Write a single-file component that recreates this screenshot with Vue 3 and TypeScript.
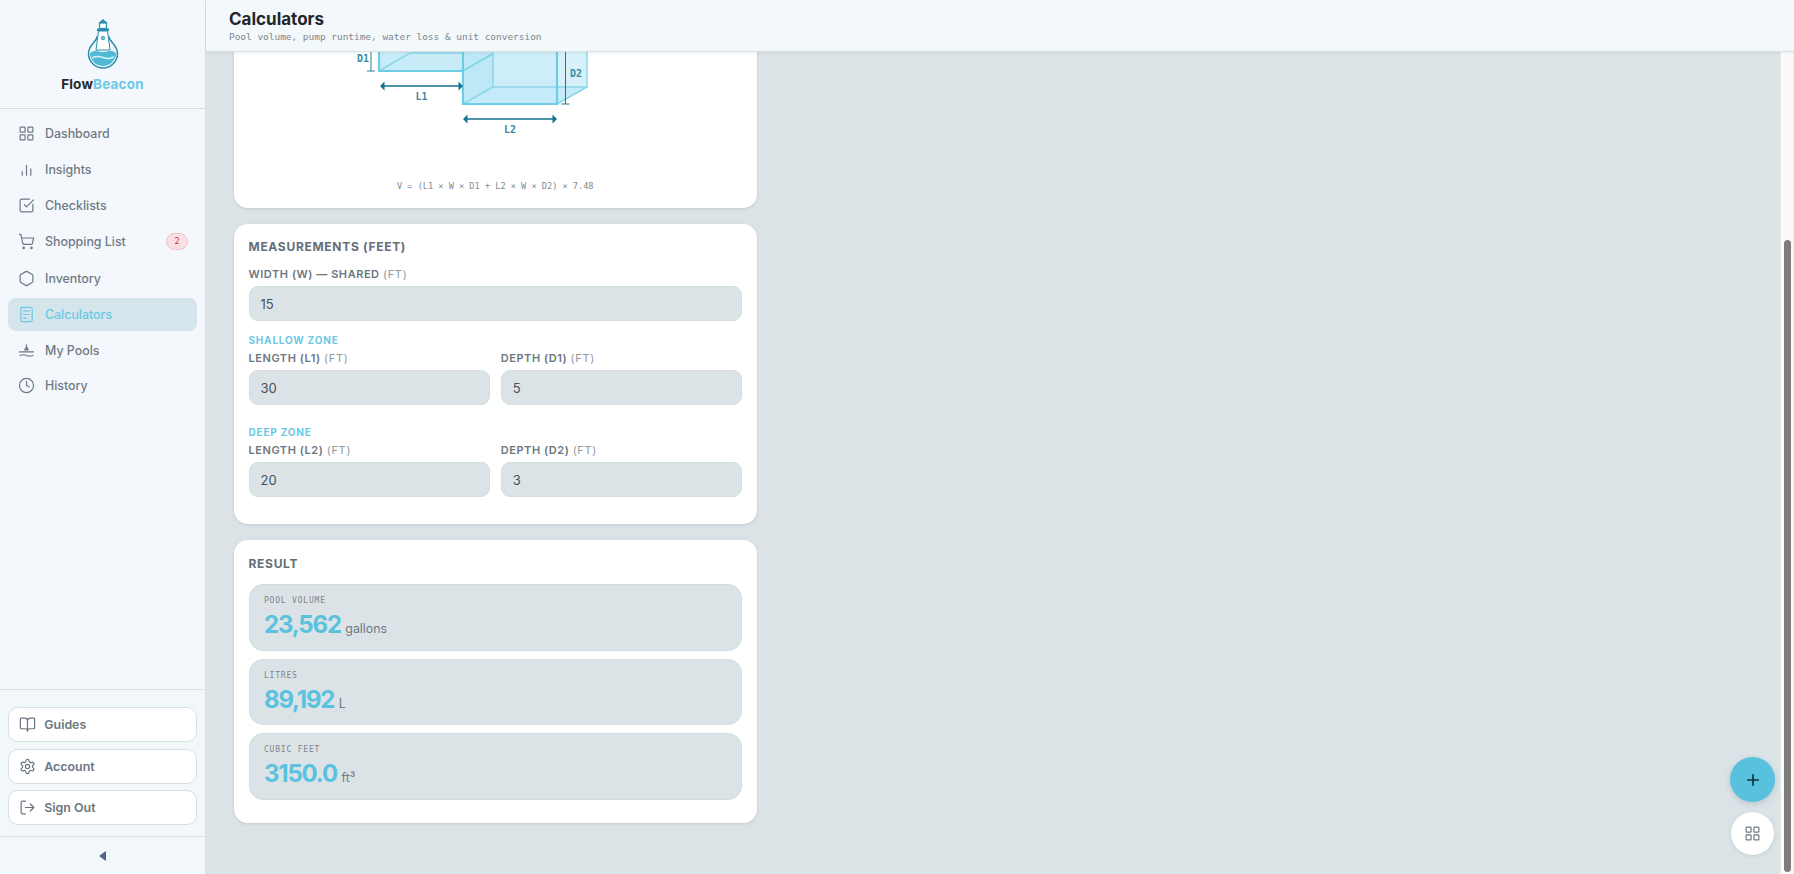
<script setup lang="ts">
import { onMounted, ref } from 'vue'

const scroller = ref<HTMLElement | null>(null)

const navItems = [
  { label: 'Dashboard', icon: 'grid' },
  { label: 'Insights', icon: 'chart' },
  { label: 'Checklists', icon: 'check' },
  { label: 'Shopping List', icon: 'cart', badge: 2 },
  { label: 'Inventory', icon: 'hex' },
  { label: 'Calculators', icon: 'calc', active: true },
  { label: 'My Pools', icon: 'pool' },
  { label: 'History', icon: 'clock' },
]
const footItems = [
  { label: 'Guides', icon: 'book' },
  { label: 'Account', icon: 'gear' },
  { label: 'Sign Out', icon: 'out' },
]
const results = [
  { label: 'POOL VOLUME', value: '23,562', unit: 'gallons' },
  { label: 'LITRES', value: '89,192', unit: 'L' },
  { label: 'CUBIC FEET', value: '3150.0', unit: 'ft³' },
]
const icons: Record<string, string> = {
  grid: '<rect x="3" y="3" width="7" height="7" rx="1"/><rect x="14" y="3" width="7" height="7" rx="1"/><rect x="14" y="14" width="7" height="7" rx="1"/><rect x="3" y="14" width="7" height="7" rx="1"/>',
  chart: '<path d="M6 20v-5M12 20V6M18 20v-9"/>',
  check: '<path d="M21 10.5V19a2 2 0 0 1-2 2H5a2 2 0 0 1-2-2V5a2 2 0 0 1 2-2h11"/><path d="m9 11 3 3L22 4"/>',
  cart: '<circle cx="8" cy="21" r="1"/><circle cx="19" cy="21" r="1"/><path d="M2.05 2.05h2l2.66 12.42a2 2 0 0 0 2 1.58h9.78a2 2 0 0 0 1.95-1.57l1.65-7.43H5.12"/>',
  hex: '<path d="M21 16V8a2 2 0 0 0-1-1.73l-7-4a2 2 0 0 0-2 0l-7 4A2 2 0 0 0 3 8v8a2 2 0 0 0 1 1.73l7 4a2 2 0 0 0 2 0l7-4A2 2 0 0 0 21 16z"/>',
  calc: '<rect x="4" y="2" width="16" height="20" rx="2"/><path d="M8 7h8M8 12h8M8 17h4"/>',
  pool: '<path d="M12 4v6"/><path d="M9.500 11l2.500-4 2.500 4z" fill="currentColor"/><path d="M2 14h20"/><path d="M3 19q4.500-2 9 0t9 0"/>',
  clock: '<circle cx="12" cy="12" r="10"/><path d="M12 6v6l4 2"/>',
  book: '<path d="M12 7v14"/><path d="M3 18a1 1 0 0 1-1-1V4a1 1 0 0 1 1-1h5a4 4 0 0 1 4 4 4 4 0 0 1 4-4h5a1 1 0 0 1 1 1v13a1 1 0 0 1-1 1h-6a3 3 0 0 0-3 3 3 3 0 0 0-3-3z"/>',
  gear: '<path d="M12.220 2h-.44a2 2 0 0 0-2 2v.18a2 2 0 0 1-1 1.730l-.43.25a2 2 0 0 1-2 0l-.15-.08a2 2 0 0 0-2.730.73l-.22.38a2 2 0 0 0 .73 2.730l.15.1a2 2 0 0 1 1 1.720v.51a2 2 0 0 1-1 1.740l-.15.09a2 2 0 0 0-.73 2.730l.22.38a2 2 0 0 0 2.730.73l.15-.08a2 2 0 0 1 2 0l.43.25a2 2 0 0 1 1 1.730V20a2 2 0 0 0 2 2h.44a2 2 0 0 0 2-2v-.18a2 2 0 0 1 1-1.730l.43-.25a2 2 0 0 1 2 0l.15.08a2 2 0 0 0 2.730-.73l.22-.39a2 2 0 0 0-.73-2.730l-.15-.08a2 2 0 0 1-1-1.740v-.5a2 2 0 0 1 1-1.740l.15-.09a2 2 0 0 0 .73-2.730l-.22-.38a2 2 0 0 0-2.730-.73l-.15.08a2 2 0 0 1-2 0l-.43-.25a2 2 0 0 1-1-1.730V4a2 2 0 0 0-2-2z"/><circle cx="12" cy="12" r="3"/>',
  out: '<path d="M9 21H5a2 2 0 0 1-2-2V5a2 2 0 0 1 2-2h4"/><path d="m16 17 5-5-5-5M21 12H9"/>',
}

onMounted(() => {
  const el = scroller.value
  if (el) el.scrollTop = el.scrollHeight
})
</script>

<template>
  <div class="app">
    <aside class="sidebar">
      <div class="brand">
        <svg class="logo" viewBox="0 0 40 56" width="40" height="56" fill="none">
          <path d="M14.500 21 C13 28 5.500 30 5.500 38.500 a14.500 14.500 0 0 0 29 0 C34.500 30 27 28 25.500 21" stroke="#2a8fae" stroke-width="1.500"/>
          <path d="M7 38 q4-3 7-2 t6 1 t6-1 t7 2 a13 13 0 0 1-26 0z" fill="#4fb9d6"/>
          <path d="M9 43 q5-2.500 11-.5 t11-.5" stroke="#d8f2f9" stroke-width="1.500"/>
          <path d="M15.500 16 h9 l2.500 19 h-14z" fill="#fff" stroke="#2a8fae" stroke-width="1"/>
          <rect x="14" y="13.500" width="12" height="2.500" fill="#2a8fae"/>
          <rect x="16.500" y="8" width="7" height="5.500" fill="#fff" stroke="#2a8fae" stroke-width="1.200"/>
          <path d="M15.500 8 L20 4 24.500 8z" fill="#2a8fae"/>
          <circle cx="20" cy="23" r="1.800" fill="#6fc0d8" stroke="#2a8fae" stroke-width=".7"/>
        </svg>
        <div class="brand-name">Flow<span>Beacon</span></div>
      </div>
      <nav class="nav">
        <a v-for="item in navItems" :key="item.label" class="nav-item" :class="{ active: item.active, tall: item.badge }">
          <svg class="ico" viewBox="0 0 24 24" v-html="icons[item.icon]"></svg>
          <span class="nav-label">{{ item.label }}</span>
          <span v-if="item.badge" class="badge">{{ item.badge }}</span>
        </a>
      </nav>
      <div class="foot">
        <a v-for="item in footItems" :key="item.label" class="foot-btn">
          <svg class="ico" viewBox="0 0 24 24" v-html="icons[item.icon]"></svg>
          <span>{{ item.label }}</span>
        </a>
      </div>
      <div class="collapse"><span class="tri"></span></div>
    </aside>

    <div class="main">
      <header class="topbar">
        <h1>Calculators</h1>
        <p>Pool volume, pump runtime, water loss &amp; unit conversion</p>
      </header>
      <div class="body">
        <div ref="scroller" class="scroller">
          <section class="card diagram-card">
            <svg class="diagram" viewBox="250 -49 491 222" width="491" height="222" fill="none">
              <!-- shallow box -->
              <path d="M380 71 L410 53.500 V0 H380z" fill="#d9f1f9"/>
              <path d="M380 0 H464 V71 H380z" fill="#c8ecf7"/>
              <path d="M380 71 L411 53 H494" stroke="#8ad6ea" stroke-width="1.500"/>
              <path d="M380 0 V71 H464" stroke="#6ecde6" stroke-width="2.200"/>
              <!-- deep box -->
              <path d="M558 -10 L588 -27 V87 L558 104z" fill="#e2f5fb"/>
              <path d="M494 -27 H588 V87 H494z" fill="#d3f0f9" fill-opacity=".7"/>
              <path d="M464 -10 H558 V104 H464z" fill="#cdeef8"/>
              <path d="M464 104 L494 87 V-27 L464 -10z" fill="#bfe8f6"/>
              <path d="M464 104 L494 87 H588 L558 104z" fill="#c4ebf7"/>
              <path d="M464 71 L494 53.500" stroke="#7ed2e8" stroke-width="1.500"/>
              <path d="M494 -27 V87 H588 V-27 M464 104 L494 87 M558 104 L588 87" stroke="#8ad6ea" stroke-width="1.500"/>
              <path d="M464 -10 V104 H558 V-10" stroke="#6ecde6" stroke-width="2.200"/>
              <!-- D1 -->
              <path d="M372 0 V71 M368 71 H376" stroke="#2b7f99" stroke-width="1"/>
              <text x="358" y="62" class="dim">D1</text>
              <!-- D2 -->
              <path d="M566.500 -10 V104 M562.500 104 H570.500" stroke="#1f7690" stroke-width="1"/>
              <text x="571" y="77" class="dim">D2</text>
              <!-- L1 -->
              <path d="M384 86 H461" stroke="#13728f" stroke-width="1.500"/>
              <path d="M381 86 l4.500-4.500 v9z M464 86 l-4.500-4.500 v9z" fill="#13728f"/>
              <text x="422.500" y="100" class="dim mid">L1</text>
              <!-- L2 -->
              <path d="M467 119 H555" stroke="#13728f" stroke-width="1.500"/>
              <path d="M464 119 l4.500-4.500 v9z M558 119 l-4.500-4.500 v9z" fill="#13728f"/>
              <text x="511" y="133" class="dim mid">L2</text>
            </svg>
            <p class="formula">V = (L1 × W × D1 + L2 × W × D2) × 7.48</p>
          </section>

          <section class="card form-card">
            <h2>MEASUREMENTS (FEET)</h2>
            <div class="field">
              <label>WIDTH (W) — SHARED <em>(FT)</em></label>
              <div class="input">15</div>
            </div>
            <h3 class="zone first">SHALLOW ZONE</h3>
            <div class="two">
              <div class="field">
                <label>LENGTH (L1) <em>(FT)</em></label>
                <div class="input">30</div>
              </div>
              <div class="field">
                <label>DEPTH (D1) <em>(FT)</em></label>
                <div class="input">5</div>
              </div>
            </div>
            <h3 class="zone">DEEP ZONE</h3>
            <div class="two">
              <div class="field">
                <label>LENGTH (L2) <em>(FT)</em></label>
                <div class="input">20</div>
              </div>
              <div class="field">
                <label>DEPTH (D2) <em>(FT)</em></label>
                <div class="input">3</div>
              </div>
            </div>
          </section>

          <section class="card result-card">
            <h2>RESULT</h2>
            <div class="results">
              <div v-for="r in results" :key="r.label" class="result">
                <div class="r-label">{{ r.label }}</div>
                <div class="r-value"><strong>{{ r.value }}</strong> <span>{{ r.unit }}</span></div>
              </div>
            </div>
          </section>
        </div>
        <div class="rail"><div class="thumb"></div></div>
      </div>
      <button class="fab plus" aria-label="Add">
        <svg viewBox="0 0 24 24" width="18" height="18" fill="none" stroke="#12303d" stroke-width="2.200" stroke-linecap="round"><path d="M12 5v14M5 12h14"/></svg>
      </button>
      <button class="fab apps" aria-label="Apps">
        <svg class="ico" viewBox="0 0 24 24" v-html="icons.grid"></svg>
      </button>
    </div>
  </div>
</template>

<style>
html, body { margin: 0; height: 100%; overflow: hidden; background: #dbe3e7; }
</style>

<style scoped>
.app {
  display: flex;
  width: 100%;
  height: 874px;
  font-family: Inter, "Noto Sans", sans-serif;
  color: #6b7680;
  background: #dbe3e7;
  overflow: hidden;
}
.sidebar {
  flex: 0 0 206px;
  box-sizing: border-box;
  display: flex;
  flex-direction: column;
  background: #f4f8fc;
  border-right: 1px solid #d8e0e5;
}
.brand {
  height: 109px;
  box-sizing: border-box;
  display: flex;
  flex-direction: column;
  align-items: center;
  padding-top: 15px;
  border-bottom: 1px solid #d5dde2;
}
.logo { display: block; }
.brand-name {
  margin-top: 5px;
  font-size: 13.500px;
  line-height: 16px;
  font-weight: 700;
  color: #20272e;
  letter-spacing: .2px;
}
.brand-name span { color: #6cc8e4; }
.nav {
  flex: 1;
  display: flex;
  flex-direction: column;
  gap: 2.750px;
  padding: 8px 8px 0;
}
.nav-item {
  display: flex;
  align-items: center;
  height: 33px;
  padding: 0 10px;
  border-radius: 8px;
  font-size: 12.400px;
  font-weight: 500;
  color: #6f7a84;
}
.nav-item.tall { height: 35px; }
.nav-item.active { background: #d5e5ec; color: #6cc8e4; }
.nav-label { margin-left: 10px; flex: 1; }
.ico {
  flex: none;
  width: 17px;
  height: 17px;
  fill: none;
  stroke: currentColor;
  stroke-width: 1.700;
  stroke-linecap: round;
  stroke-linejoin: round;
}
.badge {
  width: 22px;
  height: 17px;
  margin-right: -1px;
  border-radius: 9px;
  background: #fbdfe2;
  border: 1px solid #f0c4c9;
  box-sizing: border-box;
  color: #c0394c;
  font-family: "DejaVu Sans Mono", monospace;
  font-size: 8.500px;
  line-height: 14px;
  text-align: center;
}
.foot {
  display: flex;
  flex-direction: column;
  gap: 6.500px;
  padding: 17px 8px 11px;
  border-top: 1px solid #d8e0e5;
  background: #f2f7fa;
}
.foot-btn {
  display: flex;
  align-items: center;
  gap: 8.700px;
  height: 35px;
  padding: 0 9.600px;
  box-sizing: border-box;
  border: 1px solid #d6dfe4;
  border-radius: 10px;
  background: #fff;
  font-size: 12.400px;
  font-weight: 600;
  color: #6b7680;
}
.collapse {
  box-sizing: border-box;
  height: 38px;
  display: flex;
  align-items: center;
  justify-content: center;
  border-top: 1px solid #d8e0e5;
  background: #f2f7fa;
}
.tri {
  width: 0;
  height: 0;
  border-top: 5px solid transparent;
  border-bottom: 5px solid transparent;
  border-right: 7px solid #50687c;
}
.main {
  position: relative;
  flex: 1;
  min-width: 0;
  display: flex;
  flex-direction: column;
}
.topbar {
  flex: 0 0 52px;
  box-sizing: border-box;
  height: 52px;
  padding: 9px 23px 0;
  background: #f3f8fb;
  border-bottom: 1px solid #d8e0e5;
  box-shadow: 0 1px 3px rgba(60, 80, 90, .08);
  position: relative;
  z-index: 2;
}
.topbar h1 {
  margin: 0;
  font-size: 17px;
  line-height: 21px;
  font-weight: 700;
  color: #1f272e;
}
.topbar p {
  margin: 1px 0 0;
  font-family: "DejaVu Sans Mono", monospace;
  font-size: 9.450px;
  line-height: 12px;
  color: #7c868f;
}
.body {
  flex: 1;
  min-height: 0;
  display: flex;
}
.scroller {
  flex: 1;
  min-width: 0;
  overflow-y: hidden;
  box-sizing: border-box;
  padding: 130px 0 0 27.500px;
}
.scroller::after { content: ""; display: block; height: 51.500px; }
.rail {
  flex: 0 0 14px;
  box-sizing: border-box;
  background: #fafafa;
  border-left: 1px solid #eaeaea;
  border-right: 1px solid #eef0f2;
}
.thumb {
  width: 7.500px;
  height: 632px;
  margin: 188px 0 0 2.500px;
  border-radius: 4px;
  background: #7c7c7c;
}
.card {
  box-sizing: border-box;
  width: 523.500px;
  padding: 15px;
  margin-bottom: 16px;
  background: #fff;
  border-radius: 14px;
  box-shadow: 0 1px 3px rgba(60, 80, 90, .16);
}
.diagram-card { padding-bottom: 16px; }
.form-card { padding-bottom: 27px; margin-bottom: 16px; }
.result-card { margin-bottom: 0; padding-top: 16px; padding-bottom: 23px; }
.diagram { display: block; }
.dim {
  font-family: "DejaVu Sans Mono", monospace;
  font-size: 10px;
  font-weight: 700;
  fill: #3c8aa4;
}
.mid { text-anchor: middle; }
.formula {
  margin: 7px 0 0;
  font-family: "DejaVu Sans Mono", monospace;
  font-size: 8.600px;
  line-height: 12px;
  text-align: center;
  color: #7f8a93;
}
h2 {
  margin: 0;
  font-size: 12px;
  line-height: 15px;
  font-weight: 700;
  letter-spacing: .7px;
  color: #636e78;
}
.field { display: flex; flex-direction: column; min-width: 0; }
.card > h2 + .field { margin-top: 13px; }
label {
  font-size: 11px;
  line-height: 14px;
  font-weight: 600;
  letter-spacing: .55px;
  color: #6b7680;
}
label em { font-style: normal; font-weight: 400; color: #8f99a1; letter-spacing: .7px; }
.input {
  box-sizing: border-box;
  height: 35px;
  margin-top: 5px;
  padding: 0 11px;
  display: flex;
  align-items: center;
  background: #dbe3e7;
  border: 1px solid #d3dde1;
  border-radius: 9px;
  font-size: 13px;
  color: #47525b;
}
.zone {
  margin: 0 0 5px;
  font-size: 10px;
  line-height: 12px;
  font-weight: 700;
  letter-spacing: .8px;
  color: #6cc8e4;
}
.zone.first { margin-top: 13px; }
.two + .zone { margin-top: 21px; }
.two {
  display: grid;
  grid-template-columns: 1fr 1fr;
  gap: 11px;
}
.results { display: flex; flex-direction: column; gap: 8px; margin-top: 13px; }
.result {
  box-sizing: border-box;
  height: 66.500px;
  padding: 10px 14.500px 0;
  background: #dbe3e7;
  border: 1px solid #d3dde1;
  border-radius: 14px;
}
.r-label {
  font-family: "DejaVu Sans Mono", monospace;
  font-size: 8px;
  line-height: 11px;
  letter-spacing: .8px;
  color: #7c868f;
}
.r-value {
  margin-top: 4px;
  line-height: 30px;
  font-size: 12.400px;
  color: #6f7a84;
}
.r-value strong {
  font-size: 24px;
  font-weight: 700;
  letter-spacing: -1.200px;
  color: #5ac2de;
}
.r-value span { margin-left: 1px; }
.fab {
  position: absolute;
  padding: 0;
  border: 0;
  border-radius: 50%;
  display: flex;
  align-items: center;
  justify-content: center;
  z-index: 3;
}
.plus {
  right: 19px;
  bottom: 72px;
  width: 45px;
  height: 45px;
  background: #58c1de;
  box-shadow: 0 2px 6px rgba(40, 90, 110, .2);
}
.apps {
  right: 20px;
  bottom: 19px;
  width: 43px;
  height: 43px;
  background: #fff;
  color: #707a82;
  box-shadow: 0 1px 4px rgba(40, 70, 90, .12);
}
</style>
